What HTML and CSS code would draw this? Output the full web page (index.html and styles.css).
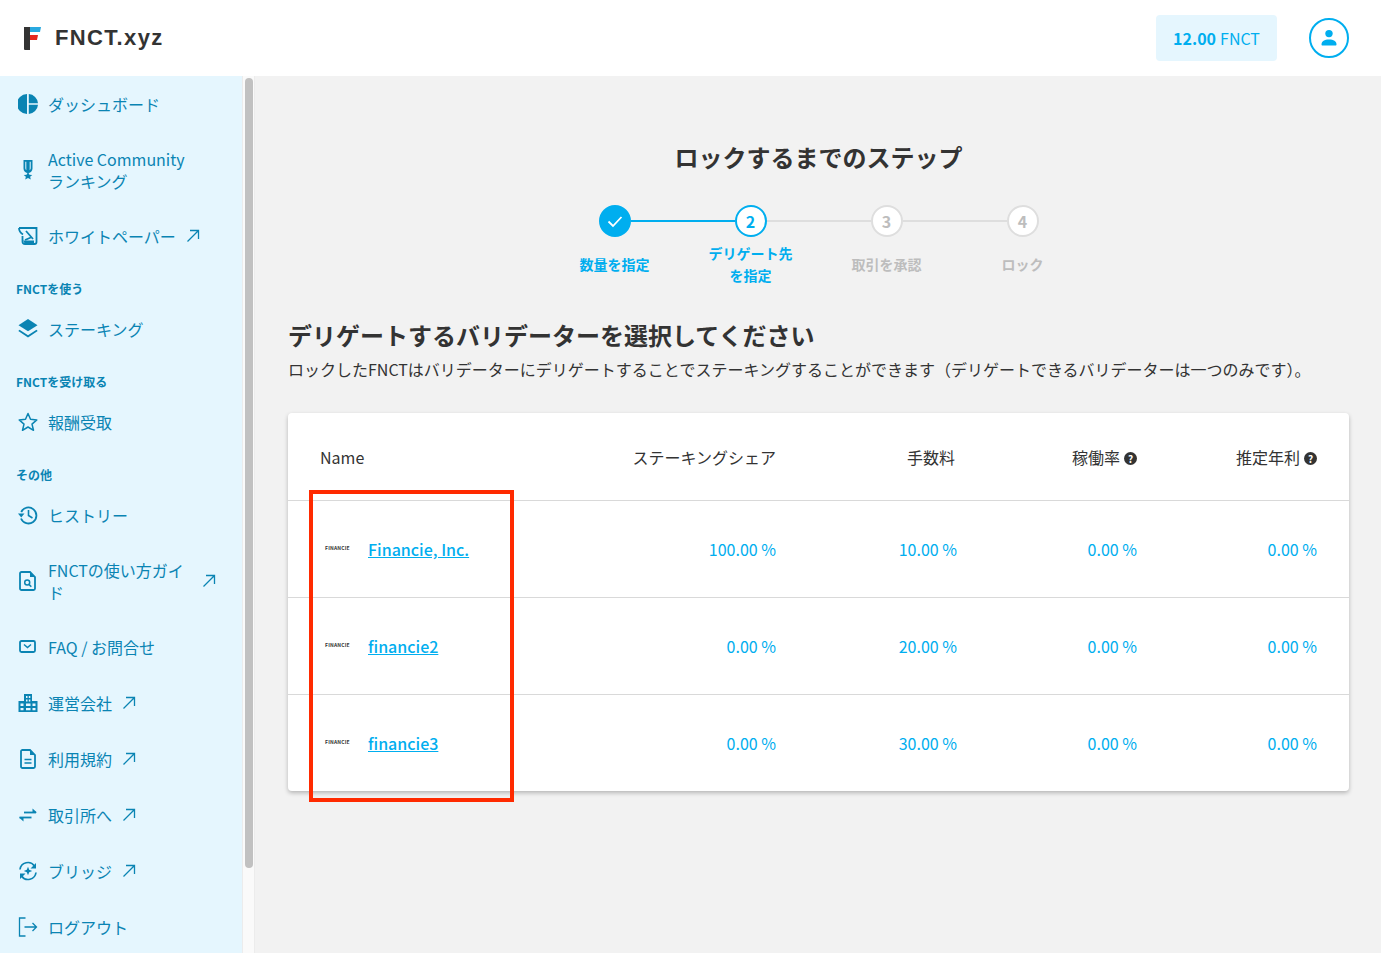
FILE: index.html
```html
<!DOCTYPE html>
<html lang="ja">
<head>
<meta charset="utf-8">
<title>FNCT.xyz</title>
<link rel="stylesheet" href="styles.css">
</head>
<body>
<header class="topbar">
  <div class="brand">
    <svg class="brand-mark" viewBox="0 0 18 23" width="18" height="23"><path d="M1 0h6v23H2a1 1 0 0 1-1-1z" fill="#333"/><path d="M7 0h11l-1 5H7z" fill="#29a9e0"/><path d="M7 8h8l-1 5H7z" fill="#e5281f"/></svg>
    <span class="brand-name">FNCT.xyz</span>
  </div>
  <div class="balance"><b>12.00</b> FNCT</div>
  <div class="avatar">
    <svg viewBox="0 0 20 20" width="20" height="20"><circle cx="10" cy="5.6" r="3.7" fill="currentColor"/><path d="M2.5 16.5c0-3.4 3-5 7.5-5s7.5 1.600 7.500 5c0 .6-.4 1-1 1h-13c-.6 0-1-.4-1-1z" fill="currentColor"/></svg>
  </div>
</header>
<div class="layout">
  <nav class="sidebar">
    <a class="item"><svg class="icon" viewBox="0 0 20 20"><path d="M9 0a10 10 0 0 0 0 20z M10.800 0A10 10 0 0 1 20 9.200h-9.200z M10.800 10.800H20A10 10 0 0 1 10.800 20z" fill="currentColor"/></svg><span>ダッシュボード</span></a>
    <a class="item item-tall"><svg class="icon" viewBox="0 0 20 20"><path d="M5.500 0h9v8.500a4.500 4.500 0 0 1-9 0z M7.300 1.800v6.500c0 .8.400 1.500 1 1.900V1.800z M11.700 1.800v8.400c.6-.4 1-1.100 1-1.900V1.800z" fill="currentColor" fill-rule="evenodd"/><path d="M10 12.800l1.700 3.200 3.300.3-2.500 2.100.8 3.100-3.300-1.800-3.300 1.800.8-3.100L5 16.300l3.300-.3z" fill="currentColor" transform="translate(1.500 1.200) scale(.85)"/></svg><span>Active Community<br>ランキング</span></a>
    <a class="item"><svg class="icon" viewBox="0 0 20 20"><path d="M1 2h17.500v14a2 2 0 0 1-2 2H7c-1.500 0-2.500-1-2.500-2.500V10" fill="none" stroke="currentColor" stroke-width="1.800"/><path d="M1 2c0 3 1.500 5 4 6.500M7 14l7-3M8 5l7 8" fill="none" stroke="currentColor" stroke-width="1.800"/><path d="M5 14.500h11v3.500H7z" fill="currentColor"/></svg><span>ホワイトペーパー</span><svg class="ext" viewBox="0 0 14 14"><path d="M1.500 12.500L12.500 1.500M4 1.500h8.500V10" fill="none" stroke="currentColor" stroke-width="1.300"/></svg></a>

    <div class="label">FNCTを使う</div>
    <a class="item"><svg class="icon" viewBox="0 0 20 20"><path d="M10 0l9.500 6.200L10 12.200.5 6.200z" fill="currentColor"/><path d="M1.500 10.800L10 16.200l8.500-5.400 1.200 1.300L10 18.500.3 12.100z" fill="currentColor"/></svg><span>ステーキング</span></a>

    <div class="label">FNCTを受け取る</div>
    <a class="item"><svg class="icon" viewBox="0 0 20 20"><path d="M10 1.500l2.500 5.800 6.300.6-4.800 4.200 1.500 6.200-5.500-3.300-5.500 3.300L6 12.100 1.200 7.900l6.300-.6z" fill="none" stroke="currentColor" stroke-width="1.500" stroke-linejoin="round"/></svg><span>報酬受取</span></a>

    <div class="label">その他</div>
    <a class="item"><svg class="icon" viewBox="0 0 20 20"><path d="M3.200 7a8 8 0 1 1-.2 6.500" fill="none" stroke="currentColor" stroke-width="1.800"/><path d="M0 8.500h6.500L3.200 12.500z" fill="currentColor"/><path d="M10.500 5v5.500l4 2.500" fill="none" stroke="currentColor" stroke-width="1.600"/></svg><span>ヒストリー</span></a>
    <a class="item item-tall"><svg class="icon" viewBox="0 0 20 20"><path d="M3.500 1h8.500l5 5v11.500a1.500 1.500 0 0 1-1.500 1.500h-12A1.500 1.500 0 0 1 2 17.500v-15A1.500 1.500 0 0 1 3.500 1z" fill="none" stroke="currentColor" stroke-width="1.800"/><path d="M12 1v5h5" fill="currentColor"/><circle cx="9.200" cy="11.500" r="2.500" fill="none" stroke="currentColor" stroke-width="1.500"/><path d="M11 13.400l2.300 2.300" stroke="currentColor" stroke-width="1.600"/></svg><span class="grow">FNCTの使い方ガイド</span><svg class="ext" viewBox="0 0 14 14"><path d="M1.500 12.500L12.500 1.500M4 1.500h8.500V10" fill="none" stroke="currentColor" stroke-width="1.300"/></svg></a>
    <a class="item"><svg class="icon" viewBox="0 0 20 20"><rect x="2" y="4" width="15" height="11" rx="1.500" fill="none" stroke="currentColor" stroke-width="1.800"/><path d="M6 7.500l3.500 3 3.500-3" fill="none" stroke="currentColor" stroke-width="1.500"/></svg><span>FAQ / お問合せ</span></a>
    <a class="item"><svg class="icon" viewBox="0 0 20 20"><path d="M6 1h8v7h5.500v11H.5V8H6z M8 3v2h1.500V3z M10.800 3v2h1.500V3z M8 6.500v2h1.500v-2z M10.800 6.500v2h1.500v-2z M2.500 10.500v2.500h3v-2.500z M8 10.500v2.500h4.500v-2.500z M14.500 10.500v2.500h3v-2.500z M2.500 15v2.200h3V15z M8 15v2.200h4.500V15z M14.500 15v2.200h3V15z" fill="currentColor" fill-rule="evenodd"/></svg><span>運営会社</span><svg class="ext" viewBox="0 0 14 14"><path d="M1.500 12.500L12.500 1.500M4 1.500h8.500V10" fill="none" stroke="currentColor" stroke-width="1.300"/></svg></a>
    <a class="item"><svg class="icon" viewBox="0 0 20 20"><path d="M4 1h8l5 5v11.500a1.500 1.500 0 0 1-1.500 1.500h-11A1.500 1.500 0 0 1 3 17.500v-15A1.500 1.500 0 0 1 4 1z" fill="none" stroke="currentColor" stroke-width="1.800"/><path d="M12 1v5h5z" fill="currentColor"/><path d="M6.500 10.500h7M6.500 14h7" stroke="currentColor" stroke-width="1.500"/></svg><span>利用規約</span><svg class="ext" viewBox="0 0 14 14"><path d="M1.500 12.500L12.500 1.500M4 1.500h8.500V10" fill="none" stroke="currentColor" stroke-width="1.300"/></svg></a>
    <a class="item"><svg class="icon" viewBox="0 0 20 20"><path d="M6 7.500h12" stroke="currentColor" stroke-width="1.800"/><path d="M14.500 3.500L19 7.500l-4.500 0z" fill="currentColor"/><path d="M1.500 12.500h12" stroke="currentColor" stroke-width="1.800"/><path d="M5.500 16.500L1 12.500l4.500 0z" fill="currentColor"/></svg><span>取引所へ</span><svg class="ext" viewBox="0 0 14 14"><path d="M1.500 12.500L12.500 1.500M4 1.500h8.500V10" fill="none" stroke="currentColor" stroke-width="1.300"/></svg></a>
    <a class="item"><svg class="icon" viewBox="0 0 20 20"><path d="M2 8.500A8 8 0 0 1 16.500 5M18 11.500A8 8 0 0 1 3.500 15" fill="none" stroke="currentColor" stroke-width="1.700"/><path d="M18 2v5.500h-5.500zM2 18v-5.500h5.500z" fill="currentColor"/><path d="M10 5.800l1.200 3 3 1.200-3 1.200-1.200 3-1.200-3-3-1.200 3-1.200z" fill="currentColor"/></svg><span>ブリッジ</span><svg class="ext" viewBox="0 0 14 14"><path d="M1.500 12.500L12.500 1.500M4 1.500h8.500V10" fill="none" stroke="currentColor" stroke-width="1.300"/></svg></a>
    <a class="item"><svg class="icon" viewBox="0 0 20 20"><path d="M7.500 1H1.500v18h6" fill="none" stroke="currentColor" stroke-width="1.300"/><path d="M6.500 10h12M14.500 6l4 4-4 4" fill="none" stroke="currentColor" stroke-width="1.300"/></svg><span>ログアウト</span></a>
  </nav>
  <div class="scrolltrack"><div class="scrollthumb"></div></div>
  <main class="main">
    <h1 class="page-title">ロックするまでのステップ</h1>
    <ol class="stepper">
      <li class="step done"><span class="dot"><svg viewBox="0 0 16 16" width="16" height="16"><path d="M1.500 8.500l4.500 4.500 8.500-9" fill="none" stroke="#fff" stroke-width="1.800"/></svg></span><span class="step-label">数量を指定</span></li>
      <li class="step current"><span class="dot">2</span><span class="step-label">デリゲート先<br>を指定</span></li>
      <li class="step"><span class="dot">3</span><span class="step-label">取引を承認</span></li>
      <li class="step"><span class="dot">4</span><span class="step-label">ロック</span></li>
    </ol>
    <h2 class="section-title">デリゲートするバリデーターを選択してください</h2>
    <p class="section-desc">ロックしたFNCTはバリデーターにデリゲートすることでステーキングすることができます（デリゲートできるバリデーターは一つのみです）。</p>
    <section class="card">
      <div class="row head">
        <div>Name</div>
        <div class="num">ステーキングシェア</div>
        <div class="num fee-head">手数料</div>
        <div class="num">稼働率<span class="help">?</span></div>
        <div class="num">推定年利<span class="help">?</span></div>
      </div>
      <div class="row">
        <div class="validator"><span class="vlogo"><span class="vlogo-text">FINANCIE</span></span><a class="vlink">Financie, Inc.</a></div>
        <div class="num val">100.00 %</div><div class="num val">10.00 %</div><div class="num val">0.00 %</div><div class="num val">0.00 %</div>
      </div>
      <div class="row">
        <div class="validator"><span class="vlogo"><span class="vlogo-text">FINANCIE</span></span><a class="vlink">financie2</a></div>
        <div class="num val">0.00 %</div><div class="num val">20.00 %</div><div class="num val">0.00 %</div><div class="num val">0.00 %</div>
      </div>
      <div class="row">
        <div class="validator"><span class="vlogo"><span class="vlogo-text">FINANCIE</span></span><a class="vlink">financie3</a></div>
        <div class="num val">0.00 %</div><div class="num val">30.00 %</div><div class="num val">0.00 %</div><div class="num val">0.00 %</div>
      </div>
      <div class="highlight"></div>
    </section>
  </main>
</div>
</body>
</html>
```
FILE: styles.css
```css
* { box-sizing: border-box; }
html, body { margin: 0; height: 953px; overflow: hidden; }
body {
  font-family: "Noto Sans CJK JP", "Noto Sans", sans-serif;
  font-size: 16px;
  color: #333;
  background: #f2f2f2;
}

.topbar {
  height: 76px;
  background: #fff;
  display: flex;
  align-items: center;
  padding: 0 32px 0 23px;
}
.brand { display: flex; align-items: center; flex: 1; }
.brand-mark { display: block; }
.brand-name {
  margin-left: 14px;
  font-family: "Liberation Sans", sans-serif;
  font-weight: 700;
  font-size: 22px;
  letter-spacing: 1.35px;
  color: #333;
}
.balance {
  width: 121px;
  height: 46px;
  background: #e5f6fe;
  border-radius: 4px;
  color: #00aeef;
  display: flex;
  align-items: center;
  justify-content: center;
  gap: 4px;
}
.balance b { font-weight: 700; }
.avatar {
  width: 40px;
  height: 40px;
  margin-left: 32px;
  border: 2px solid #00aeef;
  border-radius: 50%;
  color: #00aeef;
  display: flex;
  align-items: center;
  justify-content: center;
}

.layout { display: flex; height: 877px; }
.sidebar {
  width: 242px;
  flex: none;
  background: #e5f6fe;
  color: #0a84b3;
  overflow: hidden;
}
.item {
  height: 56px;
  display: flex;
  align-items: center;
  padding: 0 26px 0 18px;
  line-height: 22px;
}
.item-tall { height: 76px; }
.icon { width: 20px; height: 20px; flex: none; margin-right: 10px; }
.ext { width: 14px; height: 14px; flex: none; margin-left: 10px; }
.grow { flex: 1; }
.label {
  height: 37px;
  padding: 16px 0 0 16px;
  font-size: 12px;
  line-height: 18px;
  font-weight: 700;
}

.scrolltrack {
  width: 13px;
  flex: none;
  background: #fafafa;
  border-left: 1px solid #ececec;
  border-right: 1px solid #ececec;
  padding: 2px 1px 0 2px;
}
.scrollthumb { height: 790px; background: #c1c1c1; border-radius: 4px; }

.main { flex: 1; padding: 63px 32px 0 33px; min-width: 0; }
.page-title {
  margin: 0;
  font-size: 24px;
  line-height: 36px;
  font-weight: 700;
  text-align: center;
}
.stepper {
  list-style: none;
  margin: 30px auto 0;
  padding: 0;
  width: 544px;
  display: grid;
  grid-template-columns: repeat(4, 136px);
}
.step {
  position: relative;
  display: flex;
  flex-direction: column;
  align-items: center;
  color: #bdbdbd;
}
.step:not(:last-child)::after {
  content: "";
  position: absolute;
  left: 84px;
  width: 104px;
  top: 15px;
  height: 2px;
  background: #dedede;
}
.step.done::after { background: #00aeef; }
.dot {
  width: 32px;
  height: 32px;
  border-radius: 50%;
  background: #fff;
  border: 2px solid #dedede;
  display: flex;
  align-items: center;
  justify-content: center;
  font-weight: 700;
  font-size: 16px;
  line-height: 1;
}
.step-label {
  margin-top: 5px;
  height: 44px;
  display: flex;
  align-items: center;
  text-align: center;
  font-size: 14px;
  line-height: 22px;
  font-weight: 700;
}
.done, .current { color: #00aeef; }
.done .dot { background: #00aeef; border-color: #00aeef; }
.current .dot { border-color: #00aeef; }

.section-title {
  margin: 31px 0 0;
  font-size: 24px;
  line-height: 36px;
  font-weight: 700;
}
.section-desc {
  margin: 4px 0 0;
  font-size: 16px;
  line-height: 24px;
  white-space: nowrap;
}

.card {
  position: relative;
  margin-top: 32px;
  background: #fff;
  border-radius: 4px;
  box-shadow: 0 2px 4px rgba(0, 0, 0, .25);
}
.row {
  display: grid;
  grid-template-columns: 1fr 180px 181px 180px 180px;
  align-items: center;
  height: 97px;
  padding: 0 32px;
  border-top: 1px solid #d9d9d9;
}
.row.head { height: 87px; border-top: 0; }
.num { text-align: right; }
.fee-head { padding-right: 2px; }
.help {
  display: inline-block;
  width: 13px;
  height: 13px;
  margin-left: 4px;
  border-radius: 50%;
  background: #333;
  color: #fff;
  font-size: 10px;
  line-height: 13px;
  font-weight: 700;
  text-align: center;
  vertical-align: 1px;
}
.val { color: #00aeef; }
.validator { display: flex; align-items: center; }
.vlogo {
  width: 48px;
  flex: none;
  padding-left: 5px;
  display: block;
  height: 10px;
}
.vlogo-text {
  display: block;
  font-size: 5px;
  line-height: 8px;
  font-weight: 700;
  color: #333;
  letter-spacing: .2px;
}
.vlink {
  color: #00aeef;
  font-weight: 500;
  text-decoration: underline;
}

.highlight {
  position: absolute;
  left: 21px;
  top: 77px;
  width: 205px;
  height: 312px;
  border: 4px solid #ff2a00;
  pointer-events: none;
}
```
